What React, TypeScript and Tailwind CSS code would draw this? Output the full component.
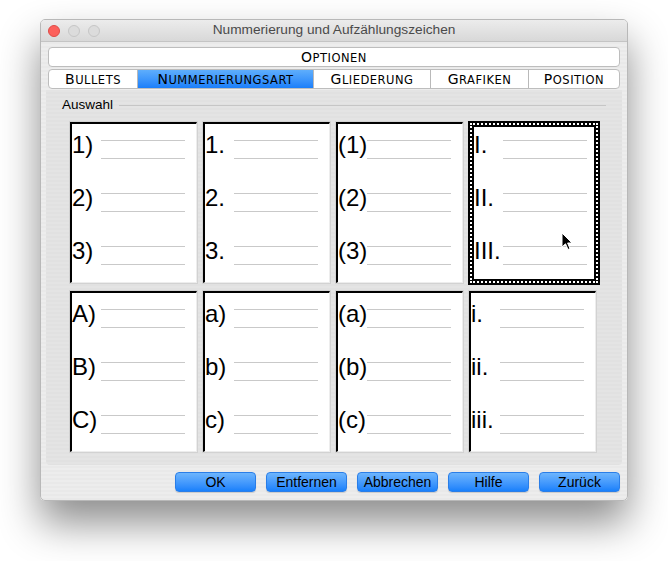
import React from "react";

const rows1: string[][] = [
  ["1)", "2)", "3)"],
  ["1.", "2.", "3."],
  ["(1)", "(2)", "(3)"],
  ["I.", "II.", "III."],
];
const rows2: string[][] = [
  ["A)", "B)", "C)"],
  ["a)", "b)", "c)"],
  ["(a)", "(b)", "(c)"],
  ["i.", "ii.", "iii."],
];

const capsFont = { fontFamily: '"DejaVu Sans", "Liberation Sans", sans-serif' };

function Caps({ text }: { text: string }) {
  return (
    <span className="whitespace-nowrap tracking-[0.5px] text-black" style={capsFont}>
      <span className="text-[14px]">{text.charAt(0).toUpperCase()}</span>
      <span className="text-[11.5px]">{text.slice(1).toUpperCase()}</span>
    </span>
  );
}

function Entry({ label }: { label: string }) {
  return (
    <div className="flex h-[53px] items-start">
      <span className="mt-[9px] w-[29px] shrink-0 whitespace-nowrap text-[24px] leading-[24px] text-black">
        {label}
      </span>
      <div className="flex w-[84px] shrink-0 flex-col">
        <div className="mt-[16px] h-px bg-[#c9c9c9]" />
        <div className="mt-[17px] h-px bg-[#c9c9c9]" />
      </div>
    </div>
  );
}

function Box({ labels, selected }: { labels: string[]; selected?: boolean }) {
  if (selected) {
    return (
      <div className="relative -mr-[3px] h-[164px] border-2 border-black bg-black">
        <div className="h-full border-2 border-dotted border-white">
          <div className="h-full overflow-hidden border-2 border-black bg-white">
            <div className="-mt-[3px]">
              {labels.map((l) => (
                <Entry key={l} label={l} />
              ))}
            </div>
          </div>
        </div>
        <svg
          className="absolute left-[91px] top-[109px]"
          width="12"
          height="19"
          viewBox="0 0 12 19"
        >
          <path
            d="M1 1 L1 15 L4.5 11.8 L7 17.5 L9 16.6 L6.6 11 L11 11 Z"
            fill="#000"
            stroke="#fff"
            strokeWidth="1"
            strokeLinejoin="round"
          />
        </svg>
      </div>
    );
  }
  return (
    <div className="h-[163px] border border-[#d2d2d2]">
      <div className="h-full overflow-hidden border-l-2 border-t-2 border-r border-b border-l-black border-t-black border-r-[#ededed] border-b-[#ededed] bg-white">
        {labels.map((l) => (
          <Entry key={l} label={l} />
        ))}
      </div>
    </div>
  );
}

function Tab({
  label,
  width,
  active,
  last,
}: {
  label: string;
  width: string;
  active?: boolean;
  last?: boolean;
}) {
  return (
    <div
      className={
        "flex h-full items-center justify-center " +
        width +
        (active ? " bg-gradient-to-b from-[#5eaefc] to-[#1a7ffa]" : "") +
        (last ? "" : " border-r border-[#b9b9b9]")
      }
    >
      <Caps text={label} />
    </div>
  );
}

function Button({ label }: { label: string }) {
  return (
    <div className="flex h-[20px] w-[81px] items-center justify-center rounded-[4px] border border-[#2a7ee8] bg-gradient-to-b from-[#6db5fd] to-[#1780fb] text-[14px] text-black shadow-[0_1px_1px_rgba(0,0,0,0.15)]">
      {label}
    </div>
  );
}

export default function App() {
  return (
    <div
      className="h-[561px] w-[668px] overflow-hidden bg-white pl-[40px] pt-[19px]"
      style={{ fontFamily: '"Liberation Sans", Arial, sans-serif' }}
    >
      <div className="flex h-[482px] w-[588px] flex-col overflow-hidden rounded-[5px] border border-[#b8b8b8] bg-[repeating-linear-gradient(to_bottom,#ededed_0px,#ededed_2px,#e9e9e9_2px,#e9e9e9_4px)] shadow-[0_22px_40px_rgba(0,0,0,0.45)]">
        {/* Title bar */}
        <div className="grid h-[22px] shrink-0 grid-cols-[80px_1fr_80px] items-center border-b border-[#c4c4c4] bg-gradient-to-b from-[#ececec] to-[#d8d8d8]">
          <div className="flex items-center gap-[8px] pl-[7px]">
            <div className="h-[12px] w-[12px] rounded-full border border-[#de4b46] bg-[#fc605b]" />
            <div className="h-[12px] w-[12px] rounded-full border border-[#c6c6c6] bg-[#dcdcdc]" />
            <div className="h-[12px] w-[12px] rounded-full border border-[#c6c6c6] bg-[#dcdcdc]" />
          </div>
          <div className="whitespace-nowrap text-center text-[13.7px] text-[#4a4a4a]">
            Nummerierung und Aufzählungszeichen
          </div>
          <div />
        </div>

        {/* Options bar */}
        <div className="mx-[7px] mt-[5px] flex h-[20px] shrink-0 items-center justify-center rounded-[4px] border border-[#bdbdbd] bg-white">
          <Caps text="Optionen" />
        </div>

        {/* Tabs */}
        <div className="mx-[7px] mt-[2px] flex h-[20px] shrink-0 overflow-hidden rounded-[4px] border border-[#bdbdbd] bg-white">
          <Tab label="Bullets" width="w-[89px]" />
          <Tab label="Nummerierungsart" width="w-[176px]" active />
          <Tab label="Gliederung" width="w-[117px]" />
          <Tab label="Grafiken" width="w-[98px]" />
          <Tab label="Position" width="flex-1" last />
        </div>

        {/* Panel */}
        <div className="mx-[5px] mt-[1px] h-[375px] shrink-0 rounded-b-[4px] bg-[repeating-linear-gradient(to_bottom,#e4e4e4_0px,#e4e4e4_2px,#e1e1e1_2px,#e1e1e1_4px)] pt-[8px]">
          <div className="flex h-[15px] items-center gap-[6px] pl-[16px] pr-[16px]">
            <span className="text-[13.5px] text-black">Auswahl</span>
            <div className="h-px flex-1 bg-[#c6c6c6]" />
          </div>
          <div className="mt-[8px] grid grid-cols-[129px_129px_129px_129px] gap-x-[4px] gap-y-[5px] pl-[23px]">
            {rows1.map((r, i) => (
              <Box key={"a" + i} labels={r} selected={i === 3} />
            ))}
            {rows2.map((r, i) => (
              <Box key={"b" + i} labels={r} />
            ))}
          </div>
        </div>

        {/* Buttons */}
        <div className="mt-[7px] flex justify-end gap-[10px] pr-[7px]">
          <Button label="OK" />
          <Button label="Entfernen" />
          <Button label="Abbrechen" />
          <Button label="Hilfe" />
          <Button label="Zurück" />
        </div>
      </div>
    </div>
  );
}
